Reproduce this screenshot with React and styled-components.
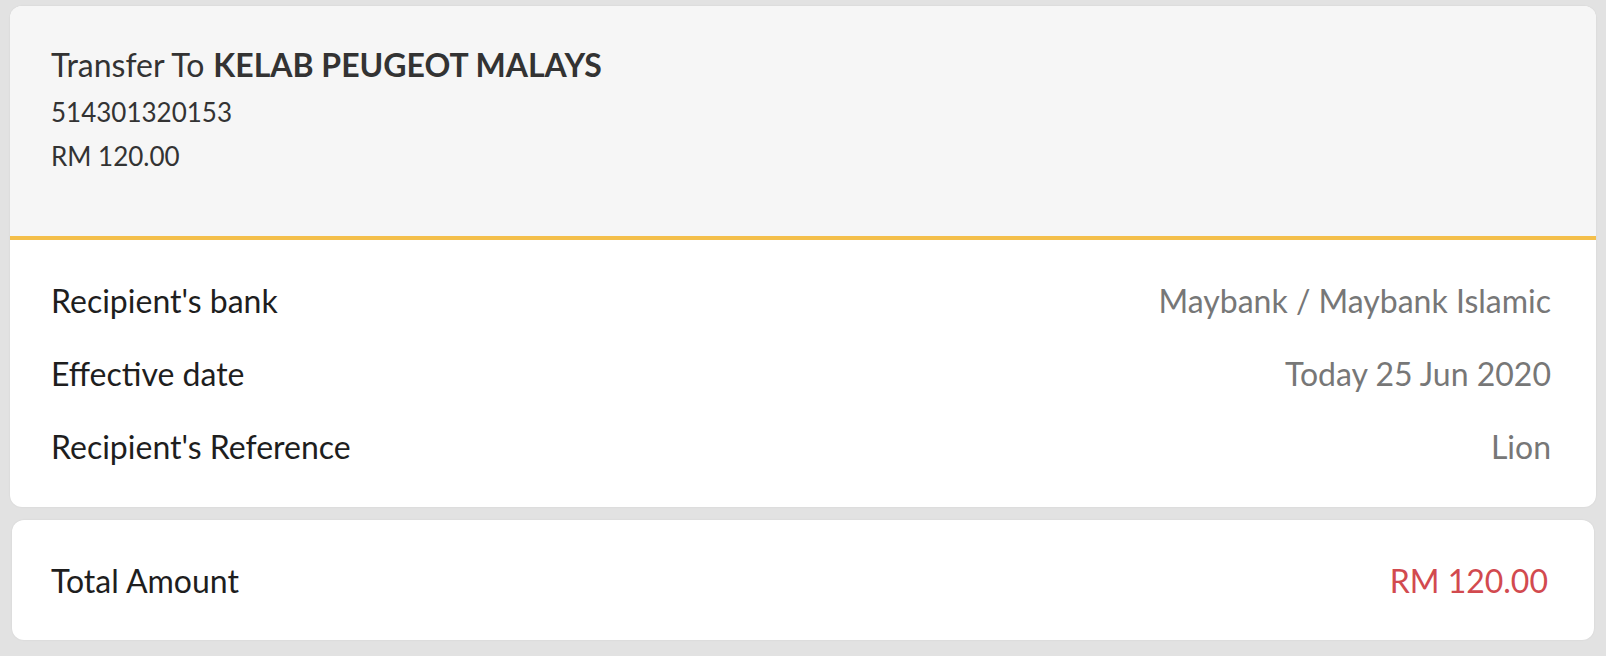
import styled, { createGlobalStyle } from "styled-components";

const GlobalStyle = createGlobalStyle`
	html, body {
		margin: 0;
		padding: 0;
		background: #e2e2e2;
		font-family: Lato, "Open Sans", sans-serif;
	}
`;

const Page = styled.div`
	width: 1606px;
	height: 656px;
	padding: 6px 10px 0 10px;
	box-sizing: border-box;
	background: #e2e2e2;
`;

const Card = styled.div`
	background: #fff;
	border-radius: 12px;
	overflow: hidden;
	margin: ${(props) => props.margin || "0"};
	box-shadow: 0 0 2px rgba(0, 0, 0, 0.08);
`;

const Header = styled.div`
	background: #f6f6f6;
	border-bottom: 4px solid #f4bf4a;
	height: 234px;
	box-sizing: border-box;
	padding: 39px 41px 0;
	color: #333;
`;

const TitleLine = styled.div`
	font-size: 32px;
	line-height: 40px;
	margin-bottom: 5px;
`;

const Bold = styled.span`
	font-weight: 700;
	margin-left: 9px;
`;

const SubLine = styled.div`
	font-size: 26px;
	line-height: 44px;
`;

const Rows = styled.div`
	padding: 24px 45px 24px 41px;
`;

const Row = styled.div`
	display: flex;
	justify-content: space-between;
	align-items: center;
	height: ${(props) => props.height || "73px"};
	font-size: 32px;
`;

const Label = styled.span`
	color: #1e1e1e;
`;

const Value = styled.span`
	color: ${(props) => props.color || "#777"};
`;

const TotalCard = styled(Card)`
	padding: 0 46px 0 39px;
`;

const App = () => {
	const details = [
		["Recipient's bank", "Maybank / Maybank Islamic"],
		["Effective date", "Today 25 Jun 2020"],
		["Recipient's Reference", "Lion"],
	];
	return (
		<Page>
			<GlobalStyle />
			<Card>
				<Header>
					<TitleLine>
						Transfer To<Bold>KELAB PEUGEOT MALAYS</Bold>
					</TitleLine>
					<SubLine>514301320153</SubLine>
					<SubLine>RM 120.00</SubLine>
				</Header>
				<Rows>
					{details.map(([label, value]) => (
						<Row key={label}>
							<Label>{label}</Label>
							<Value>{value}</Value>
						</Row>
					))}
				</Rows>
			</Card>
			<TotalCard margin="13px 2px 0">
				<Row height="120px">
					<Label>Total Amount</Label>
					<Value color="#d24a4f">RM 120.00</Value>
				</Row>
			</TotalCard>
		</Page>
	);
};

export default App;
